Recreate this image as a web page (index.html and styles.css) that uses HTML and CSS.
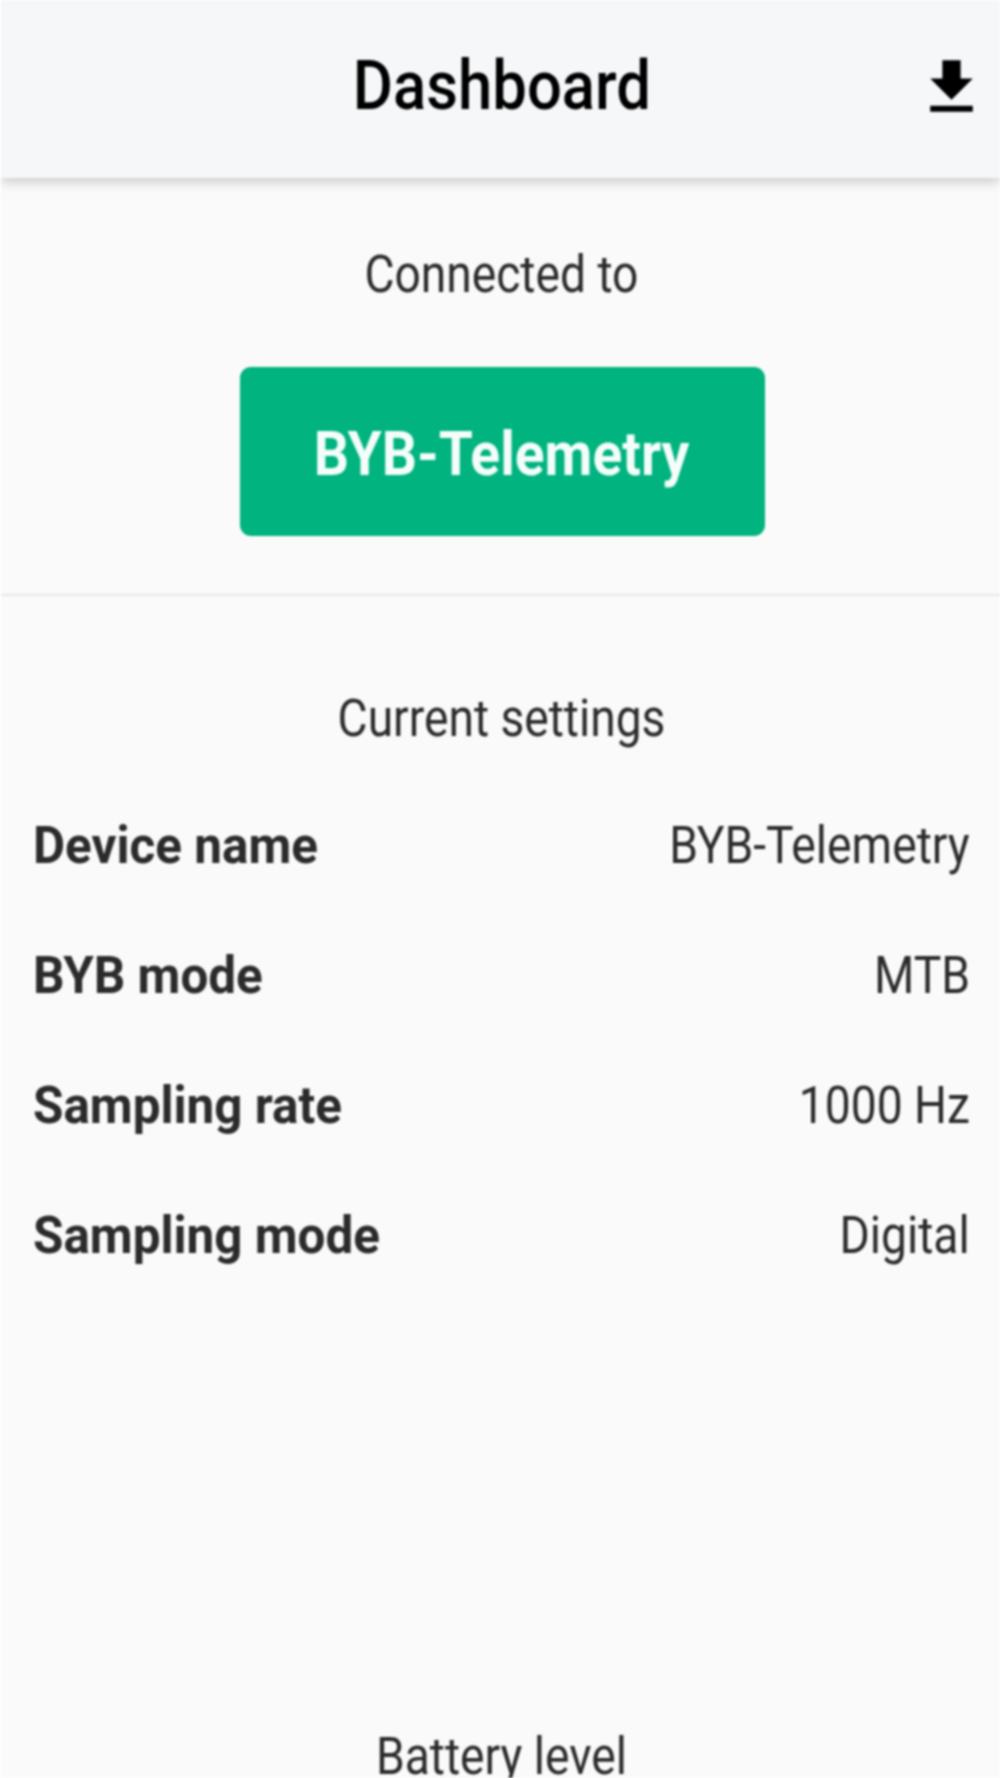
FILE: index.html
```html
<!DOCTYPE html>
<html lang="en">
<head>
<meta charset="utf-8">
<title>Dashboard</title>
<link rel="stylesheet" href="styles.css">
</head>
<body>
<div class="screen">
  <header class="appbar">
    <h1 class="appbar-title">Dashboard</h1>
    <button class="icon-btn" type="button" aria-label="Download">
      <svg class="icon" viewBox="0 0 24 24"><path d="M19 9h-4V3H9v6H5l7 7 7-7zM5 18v2h14v-2H5z"/></svg>
    </button>
  </header>
  <section class="connected">
    <p class="caption">Connected to</p>
    <div class="device-btn"><span class="device-label">BYB-Telemetry</span></div>
  </section>
  <section class="settings">
    <p class="caption">Current settings</p>
    <dl class="rows">
      <div class="row"><dt>Device name</dt><dd>BYB-Telemetry</dd></div>
      <div class="row"><dt>BYB mode</dt><dd>MTB</dd></div>
      <div class="row"><dt>Sampling rate</dt><dd>1000 Hz</dd></div>
      <div class="row"><dt>Sampling mode</dt><dd>Digital</dd></div>
    </dl>
  </section>
  <section class="battery">
    <p class="caption">Battery level</p>
  </section>
</div>
</body>
</html>
```
FILE: styles.css
```css
* { box-sizing: border-box; }
html, body { margin: 0; padding: 0; }
body {
  width: 1000px;
  height: 1778px;
  overflow: hidden;
  background: #ffffff;
  padding-left: 1px;
  font-family: Roboto, "Liberation Sans", sans-serif;
}
.screen {
  height: 1778px;
  overflow: hidden;
  filter: blur(0.8px);
  background: #fafafa;
}
.appbar {
  height: 178px;
  padding: 0 0 7px 2px;
  display: flex;
  align-items: center;
  justify-content: center;
  background: #f6f7f9;
  box-shadow: 0 3px 12px rgba(0, 0, 0, 0.22);
  position: relative;
}
.appbar-title {
  margin: 0;
  font-size: 69px;
  font-weight: 500;
  line-height: 72px;
  color: #000;
  transform: scaleX(0.893);
}
.icon-btn {
  position: absolute;
  right: 11px;
  top: 42px;
  width: 75px;
  height: 90px;
  padding: 0;
  border: 0;
  background: none;
  display: flex;
  align-items: center;
  justify-content: center;
}
.icon { width: 73px; height: 75px; fill: #000; display: block; }
.caption {
  margin: 0;
  text-align: center;
  font-size: 51px;
  line-height: 56px;
  color: #2b2b2b;
  transform: scaleX(0.905);
}
.connected {
  height: 418px;
  padding: 69px 0 0 2px;
  border-bottom: 2px solid #e8e8e8;
  display: flex;
  flex-direction: column;
  align-items: center;
}
.device-btn {
  margin: 64px 0 0 2px;
  width: 525px;
  height: 169px;
  display: flex;
  align-items: center;
  justify-content: center;
  border-radius: 11px;
  background: #00b37f;
  color: #f4fdfa;
  font-size: 61px;
  font-weight: 700;
}
.device-label { transform: translate(-1px, 2px) scaleX(0.905); }
.settings { padding: 95px 0 0 2px; }
.rows { margin: 33px 0 0; padding: 0 30px; }
.row {
  height: 130px;
  display: flex;
  align-items: center;
  justify-content: space-between;
  color: #2b2b2b;
}
.row dt {
  font-size: 52px;
  font-weight: 700;
  transform: scaleX(0.95);
  transform-origin: left center;
}
.row dd {
  margin: 0;
  font-size: 51px;
  transform: scaleX(0.906);
  transform-origin: right center;
}
.battery { padding: 429px 0 0 2px; }
```
